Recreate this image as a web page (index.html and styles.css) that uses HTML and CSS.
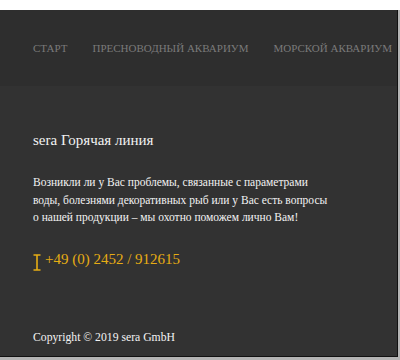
FILE: index.html
```html
<!DOCTYPE html>
<html lang="ru">
<head>
  <meta charset="UTF-8" />
  <meta name="viewport" content="width=device-width, initial-scale=1.0"/>
  <title>sera Горячая линия</title>
  <link rel="stylesheet" href="styles.css">
</head>
<body>

  <div class="site">
    <div class="header">
      <ul class="nav">
        <li>Старт</li>
        <li>Пресноводный аквариум</li>
        <li>Морской аквариум</li>
      </ul>
    </div>

    <div class="main">
      <h2>sera Горячая линия</h2>
      <p class="text">
        Возникли ли у Вас проблемы, связанные с параметрами<br/>
        воды, болезнями декоративных рыб или у Вас есть вопросы<br/>
        о нашей продукции – мы охотно поможем лично Вам!
      </p>
      <div class="phone">
        <svg class="phone-icon" width="8" height="17" viewBox="0 0 8 17">
          <path d="M0.5 1h7M0.5 16h7M4 1v15" stroke="#e6ad14" stroke-width="1.6" fill="none"/>
        </svg>
        <span>+49 (0) 2452 / 912615</span>
      </div>
      <div class="copy">Copyright © 2019 sera GmbH</div>
    </div>
  </div>

</body>
</html>
```

FILE: styles.css
```css
html, body {
  margin: 0;
  padding: 0;
}
body {
  background: #fff;
  font-family: "Liberation Serif", "Times New Roman", serif;
  height: 360px;
  overflow: hidden;
}
.site {
  margin-top: 10px;
  width: 397px;
  height: 346px;
  border-right: 1px solid #111;
  border-bottom: 1px solid #111;
  background: #323232;
  box-shadow: 2px 0 0 #b4b4b4, 0 3px 0 #b4b4b4, 2px 3px 0 #b4b4b4;
}
.header {
  height: 76px;
  background: #2e2e2e;
  display: flex;
  align-items: center;
}
.nav {
  list-style: none;
  margin: 0;
  padding: 0 0 0 33px;
  display: flex;
  gap: 25px;
  white-space: nowrap;
}
.nav li {
  text-transform: uppercase;
  font-size: 11px;
  color: #7a7a7a;
}
.main {
  padding: 45px 33px 0;
  color: #f2f2f2;
}
h2 {
  margin: 0;
  font-size: 15px;
  font-weight: normal;
  line-height: 18px;
}
.text {
  margin: 25px 0 0;
  font-size: 11.5px;
  line-height: 17.5px;
}
.phone {
  margin-top: 22px;
  display: flex;
  align-items: center;
  gap: 4px;
  color: #e6ad14;
  font-size: 15px;
}
.phone-icon {
  margin-top: 5px;
}
.copy {
  margin-top: 60px;
  font-size: 11.7px;
}
```
